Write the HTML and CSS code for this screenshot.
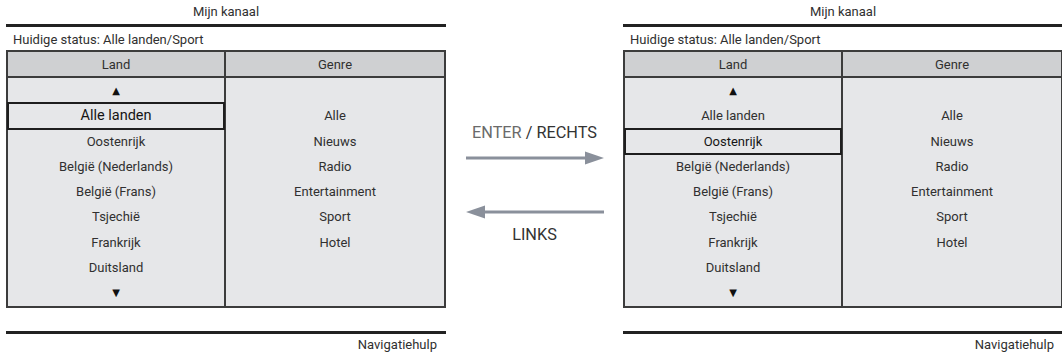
FILE: index.html
```html
<!DOCTYPE html>
<html lang="nl">
<head>
<meta charset="utf-8">
<title>Mijn kanaal</title>
<link rel="stylesheet" href="styles.css">
</head>
<body>
<div class="page">
  <section class="panel">
    <div class="title">Mijn kanaal</div>
    <div class="status">Huidige status: Alle landen/Sport</div>
    <div class="table">
      <div class="col col-left">
        <div class="head">Land</div>
        <div class="body">
          <div class="row tri">▲</div>
          <div class="row selected big">Alle landen</div>
          <div class="row">Oostenrijk</div>
          <div class="row">België (Nederlands)</div>
          <div class="row">België (Frans)</div>
          <div class="row">Tsjechië</div>
          <div class="row">Frankrijk</div>
          <div class="row">Duitsland</div>
          <div class="row tri">▼</div>
        </div>
      </div>
      <div class="col">
        <div class="head">Genre</div>
        <div class="body">
          <div class="row"></div>
          <div class="row">Alle</div>
          <div class="row">Nieuws</div>
          <div class="row">Radio</div>
          <div class="row">Entertainment</div>
          <div class="row">Sport</div>
          <div class="row">Hotel</div>
          <div class="row"></div>
          <div class="row"></div>
        </div>
      </div>
    </div>
    <div class="foot">Navigatiehulp</div>
  </section>

  <div class="middle">
    <div class="caption caption-top"><span class="light">ENTER</span> / RECHTS</div>
    <svg class="arrow arrow-right" width="138" height="14" viewBox="0 0 138 14">
      <line x1="0" y1="7" x2="122" y2="7" stroke="#8a909b" stroke-width="3"/>
      <polygon points="119,0.5 138,7 119,13.5" fill="#8a909b"/>
    </svg>
    <svg class="arrow arrow-left" width="138" height="14" viewBox="0 0 138 14">
      <line x1="16" y1="7" x2="138" y2="7" stroke="#8a909b" stroke-width="3"/>
      <polygon points="19,0.5 0,7 19,13.5" fill="#8a909b"/>
    </svg>
    <div class="caption caption-bottom">LINKS</div>
  </div>

  <section class="panel">
    <div class="title">Mijn kanaal</div>
    <div class="status">Huidige status: Alle landen/Sport</div>
    <div class="table">
      <div class="col col-left">
        <div class="head">Land</div>
        <div class="body">
          <div class="row tri">▲</div>
          <div class="row">Alle landen</div>
          <div class="row selected">Oostenrijk</div>
          <div class="row">België (Nederlands)</div>
          <div class="row">België (Frans)</div>
          <div class="row">Tsjechië</div>
          <div class="row">Frankrijk</div>
          <div class="row">Duitsland</div>
          <div class="row tri">▼</div>
        </div>
      </div>
      <div class="col">
        <div class="head">Genre</div>
        <div class="body">
          <div class="row"></div>
          <div class="row">Alle</div>
          <div class="row">Nieuws</div>
          <div class="row">Radio</div>
          <div class="row">Entertainment</div>
          <div class="row">Sport</div>
          <div class="row">Hotel</div>
          <div class="row"></div>
          <div class="row"></div>
        </div>
      </div>
    </div>
    <div class="foot">Navigatiehulp</div>
  </section>
</div>
</body>
</html>
```

FILE: styles.css
```css
* { box-sizing: border-box; }

html, body {
  margin: 0;
  padding: 0;
  background: #ffffff;
  width: 1062px;
  height: 355px;
  overflow: hidden;
}

body {
  font-family: Roboto, "Noto Sans", "DejaVu Sans", sans-serif;
  font-size: 13px;
  color: #303030;
}

.page {
  display: flex;
  padding-left: 6px;
  width: 1070px;
}

.panel {
  width: 440px;
  flex-shrink: 0;
}

.title {
  height: 24px;
  line-height: 24px;
  text-align: center;
  border-bottom: 3px solid #222222;
  height: 27px;
  padding-bottom: 0;
}

.status {
  height: 23px;
  padding: 2px 0 0 7px;
  line-height: 21px;
}

.table {
  display: grid;
  grid-template-columns: 1fr 1fr;
  border: 2px solid #3c3c3c;
}

.col-left {
  border-right: 2px solid #3c3c3c;
}

.head {
  height: 26px;
  padding-top: 1px;
  line-height: 24px;
  text-align: center;
  background: #cfd0d2;
  border-bottom: 2px solid #3c3c3c;
}

.body {
  background: #e6e7e9;
}

.row {
  height: 25.3px;
  line-height: 25.3px;
  text-align: center;
  white-space: nowrap;
}

.row.tri {
  font-family: "DejaVu Sans", sans-serif;
  font-size: 10px;
  color: #111111;
}

.row.selected {
  position: relative;
  outline: 2.5px solid #1e1e1e;
  outline-offset: -1px;
  color: #151515;
}

.row.big {
  font-size: 14.5px;
}

.foot {
  margin-top: 23px;
  border-top: 3px solid #222222;
  height: 25px;
  line-height: 22px;
  text-align: right;
  padding-right: 9px;
}

.middle {
  width: 177px;
  flex-shrink: 0;
  display: flex;
  flex-direction: column;
  align-items: center;
  padding-top: 123px;
}

.caption {
  font-size: 16.3px;
  line-height: 20px;
  color: #333333;
  white-space: nowrap;
}

.caption .light {
  color: #6a6a6a;
}

.arrow {
  display: block;
}

.arrow-right {
  margin-top: 8px;
}

.arrow-left {
  margin-top: 40px;
}

.caption-bottom {
  margin-top: 6px;
}
```
